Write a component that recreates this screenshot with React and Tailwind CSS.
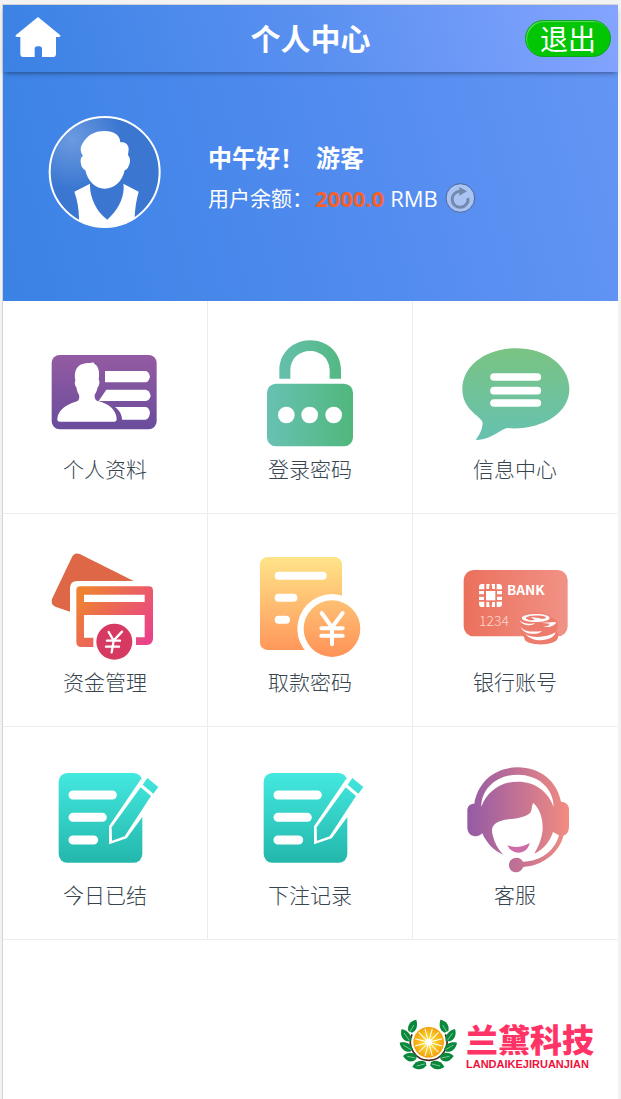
import React from "react";

const white = "#ffffff";

function HomeIcon() {
  return (
    <svg viewBox="45 42 144 132" className="h-11 w-12" aria-hidden="true">
      <path
        fill={white}
        d="M117 48 L184 103 Q186 108 180 108 H171 V158 Q171 168 161 168 H129 V144 Q129 136 121 136 H115 Q107 136 107 144 V168 H74 Q64 168 64 158 V108 H55 Q48 108 50 103 Z"
      />
    </svg>
  );
}

function Avatar() {
  return (
    <svg viewBox="54 45 342 342" className="size-[114px] shrink-0" role="img" aria-label="游客">
      <defs>
        <radialGradient id="avatarGlow" cx="0.2" cy="0.2" r="0.45">
          <stop offset="0" stopColor="#6c9be0" />
          <stop offset="1" stopColor="#3b77d1" />
        </radialGradient>
        <clipPath id="avatarClip">
          <circle cx="224" cy="216" r="166" />
        </clipPath>
      </defs>
      <circle cx="224" cy="216" r="163" fill="url(#avatarGlow)" />
      <g fill={white} clipPath="url(#avatarClip)">
        <path d="M159 168 C150 155 150 141 158 130 C172 107 190 93 224 93 C252 93 270 105 271 127 C285 125 296 133 296 148 L294 166 C301 172 302 188 296 198 C293 206 289 209 284 211 C277 244 254 266 224 266 C194 266 173 242 166 211 C158 206 153 199 152 186 C151 177 154 170 159 168 Z" />
        <path d="M133 275 L180 251 C178 290 199 335 232 359 C264 330 286 290 280 251 L326 275 C319 300 315 325 314 352 L314 390 H147 V352 C146 325 142 300 133 275 Z" />
      </g>
      <circle cx="224" cy="216" r="165" fill="none" stroke={white} strokeWidth="6" />
    </svg>
  );
}

function RefreshIcon() {
  return (
    <svg viewBox="762 153 96 96" className="size-8" aria-hidden="true">
      <circle cx="811" cy="201" r="43" fill="#a9c3f3" stroke="#4a6698" strokeWidth="3" />
      <path d="M811 181 A24 24 0 1 0 834 201" fill="none" stroke="#7389ad" strokeWidth="9" />
      <path d="M808 168 L831 181 L808 194 Z" fill="#7389ad" />
    </svg>
  );
}

const iconClass = "size-[120px]";

function ProfileIcon() {
  return (
    <svg viewBox="45 21 360 360" className={iconClass} aria-hidden="true">
      <defs>
        <linearGradient id="profile" x1="0" y1="0" x2="0" y2="1">
          <stop offset="0" stopColor="#945ba2" />
          <stop offset="1" stopColor="#694c9c" />
        </linearGradient>
      </defs>
      <rect x="65" y="75" width="315" height="223" rx="24" fill="url(#profile)" />
      <g fill={white}>
        <path d="M136 152 C131 124 140 103 167 100 C177 99 184 100 190 97 C192 103 199 104 203 112 C208 121 208 137 206 149 C211 155 207 168 203 172 C201 183 197 190 194 194 C193 207 198 212 207 214 C238 222 259 241 260 267 Q260 275 252 275 H90 Q81 275 82 266 C84 239 110 224 135 216 C148 212 149 205 147 194 C142 188 141 181 139 172 C134 165 133 158 136 152 Z" />
        <path d="M225 123 H347 Q356 124 360 140 Q356 156 347 157 H225 Z" />
        <path d="M229 179 H347 Q359 181 362 197 Q359 211 347 213 H206 Z" />
        <path d="M255 231 H347 Q358 232 360 249 Q357 267 347 269 H276 C276 254 268 240 255 231 Z" />
      </g>
    </svg>
  );
}

function LockIcon() {
  return (
    <svg viewBox="660 21 360 360" className={iconClass} aria-hidden="true">
      <defs>
        <linearGradient id="lock" gradientUnits="userSpaceOnUse" x1="711" y1="0" x2="969" y2="0">
          <stop offset="0" stopColor="#68c1b3" />
          <stop offset="1" stopColor="#50b77c" />
        </linearGradient>
      </defs>
      <path
        fill="url(#lock)"
        d="M748 146 V121 C748 68 790 31 840 31 C893 31 933 68 933 121 V146 H899 V121 C899 86 872 63 840 63 C807 63 781 86 781 121 V146 Z"
      />
      <rect x="711" y="161" width="258" height="188" rx="27" fill="url(#lock)" />
      <g fill={white}>
        <circle cx="769" cy="255" r="25" />
        <circle cx="839" cy="255" r="25" />
        <circle cx="911" cy="255" r="25" />
      </g>
    </svg>
  );
}

function MessageIcon() {
  return (
    <svg viewBox="45 21 360 360" className={iconClass} aria-hidden="true">
      <defs>
        <linearGradient id="message" x1="0" y1="0" x2="0" y2="1">
          <stop offset="0" stopColor="#7ac383" />
          <stop offset="1" stopColor="#66c1b0" />
        </linearGradient>
      </defs>
      <path
        fill="url(#message)"
        d="M228 55 C319 55 388 108 388 177 C388 248 311 298 211 295 Q200 292 188 299 C164 313 142 329 107 330 C120 313 130 292 127 275 C120 257 67 239 67 177 C67 108 137 55 228 55 Z"
      />
      <g stroke={white} strokeWidth="23" strokeLinecap="round">
        <path d="M162 141 H292" />
        <path d="M162 182 H292" />
        <path d="M162 219 H292" />
      </g>
    </svg>
  );
}

function FundsIcon() {
  return (
    <svg viewBox="45 30 360 360" className={iconClass} aria-hidden="true">
      <defs>
        <linearGradient id="funds" x1="0" y1="0.2" x2="1" y2="0.8">
          <stop offset="0" stopColor="#ee8430" />
          <stop offset="1" stopColor="#e9428a" />
        </linearGradient>
      </defs>
      <path
        fill="#dd6746"
        d="M126 51 Q133 36 149 42 L311 123 H142 Q120 123 120 145 V215 L76 200 Q61 193 66 177 Z"
      />
      <path
        fill="url(#funds)"
        fillRule="evenodd"
        d="M151 139 H356 Q369 139 369 152 V296 Q368 314 350 315 H318 V292 H344 V225 H162 V293 H190 V321 H154 Q139 321 139 307 V151 Q139 139 151 139 Z M162 164 V186 H344 V164 Z"
      />
      <circle cx="253" cy="305" r="54" fill="#d63961" />
      <g fill="none" stroke={white} strokeWidth="7" strokeLinecap="round">
        <path d="M236 276 L251 302 L276 275 M251 302 L245 337 M231 302 H270 M228 320 H267" />
      </g>
    </svg>
  );
}

function WithdrawIcon() {
  return (
    <svg viewBox="660 30 360 360" className={iconClass} aria-hidden="true">
      <defs>
        <linearGradient id="withdraw" gradientUnits="userSpaceOnUse" x1="0" y1="51" x2="0" y2="350">
          <stop offset="0" stopColor="#fee488" />
          <stop offset="1" stopColor="#ff9258" />
        </linearGradient>
      </defs>
      <rect x="690" y="51" width="246" height="279" rx="22" fill="url(#withdraw)" />
      <circle cx="906" cy="266" r="104" fill={white} />
      <circle cx="906" cy="266" r="85" fill="url(#withdraw)" />
      <g fill="none" stroke={white} strokeLinecap="round">
        <path strokeWidth="24" d="M746 107 H878 M746 173 H790 M746 239 H768" />
        <path
          strokeWidth="12"
          strokeLinejoin="round"
          d="M875 219 L906 262 L938 219 M906 262 V313 M874 265 H938 M874 287 H938"
        />
      </g>
    </svg>
  );
}

function BankIcon() {
  return (
    <svg viewBox="45 0 360 360" className={iconClass} aria-hidden="true">
      <defs>
        <linearGradient id="bank" x1="0" y1="0" x2="1" y2="0">
          <stop offset="0" stopColor="#eb705c" />
          <stop offset="1" stopColor="#f19286" />
        </linearGradient>
      </defs>
      <rect x="71" y="60" width="312" height="199" rx="30" fill="url(#bank)" />
      <g fill={white}>
        <rect x="138" y="123" width="28" height="28" />
        <path d="M117 118 V112 Q117 102 127 102 H133 V118 Z" />
        <path d="M186 118 V112 Q186 102 176 102 H170 V118 Z" />
        <path d="M117 155 V161 Q117 171 127 171 H133 V155 Z" />
        <path d="M186 155 V161 Q186 171 176 171 H170 V155 Z" />
        <path d="M139 102 H149 L147 117 H139 Z M155 102 H165 V117 H157 Z" />
        <path d="M139 171 H149 L147 156 H139 Z M155 171 H165 V156 H157 Z" />
        <path d="M117 123 H132 V133 H117 Z M117 140 H132 V150 H117 Z" />
        <path d="M171 123 H186 V133 H171 Z M171 140 H186 V150 H171 Z" />
      </g>
      <text x="201" y="135" fill={white} fontSize="41" fontWeight="700" fontFamily="'Noto Sans CJK SC', sans-serif">
        BANK
      </text>
      <text x="117" y="228" fill="#fbd8d1" fontSize="42" fontWeight="300" fontFamily="'Noto Sans CJK SC', sans-serif">
        1234
      </text>
      <path
        fill="#ed7c6d"
        d="M239 208 C250 185 317 181 335 203 C356 209 358 229 348 243 C357 253 358 266 346 274 C320 288 269 286 255 271 L251 259 C240 253 235 240 245 229 Z"
      />
      <g fill={white}>
        <path
          fillRule="evenodd"
          d="M245 204 C249 189 327 187 329 204 C327 219 249 221 245 204 Z M257 204 C262 211 277 213 284 209 L272 201 L296 204 C304 208 316 207 318 203 C313 195 266 194 257 204 Z"
        />
        <path d="M238 209 C246 220 266 223 286 220 C272 231 245 226 238 209 Z" />
        <path d="M303 218 L349 216 C344 230 323 234 309 229 C322 229 329 225 329 221 Z" />
        <path d="M243 230 C250 245 278 247 306 243 C293 258 245 253 243 230 Z" />
        <path d="M256 251 C275 265 318 264 347 247 C341 274 278 281 256 251 Z" />
      </g>
    </svg>
  );
}

function NoteIcon({ id }) {
  const fill = `url(#${id})`;
  return (
    <svg viewBox="45 24 360 360" className={iconClass} aria-hidden="true">
      <defs>
        <linearGradient id={id} gradientUnits="userSpaceOnUse" x1="0" y1="54" x2="0" y2="323">
          <stop offset="0" stopColor="#43e8df" />
          <stop offset="1" stopColor="#24b7ac" />
        </linearGradient>
      </defs>
      <rect x="86" y="54" width="251" height="269" rx="26" fill={fill} />
      <path d="M333 72 L343 80 V190 L337 186 L290 250 L237 268 V214 Z" fill={white} />
      <path d="M332 97 L363 123 L284 244 L246 257 L245 217 Z" fill={fill} />
      <path d="M352 69 L385 96 L370 116 L338 89 Z" fill={fill} />
      <path
        d="M129 120 H247 M129 187 H217 M129 255 H191"
        stroke={white}
        strokeWidth="27"
        strokeLinecap="round"
      />
    </svg>
  );
}

function ServiceIcon() {
  return (
    <svg viewBox="45 24 360 360" className={iconClass} aria-hidden="true">
      <defs>
        <linearGradient id="service" gradientUnits="userSpaceOnUse" x1="82" y1="0" x2="387" y2="0">
          <stop offset="0" stopColor="#935ba5" />
          <stop offset="0.45" stopColor="#be6f96" />
          <stop offset="1" stopColor="#f38c80" />
        </linearGradient>
      </defs>
      <path
        fill="url(#service)"
        fillRule="evenodd"
        d="M103 146 C113 82 164 37 232 37 C303 37 352 81 363 140 C379 141 387 150 387 164 V213 C387 231 380 239 371 241 C357 294 308 333 250 336 C244 347 238 352 229 352 C216 352 207 343 207 330 C207 317 217 308 230 308 C239 308 246 313 249 320 C303 320 345 286 357 241 L339 231 C329 262 309 284 283 296 C300 267 307 244 308 220 C308 190 301 164 280 144 C274 152 277 166 271 173 C248 195 204 188 176 200 C155 209 153 225 159 244 C164 265 174 283 190 299 C163 289 140 265 127 235 C119 243 110 245 101 243 C89 240 82 231 82 215 V168 C82 153 90 146 103 146 Z M124 155 C140 113 178 80 233 80 C287 80 325 111 341 156 C341 100 295 59 233 59 C171 59 124 101 124 155 Z"
      />
      <path d="M202 271 Q235 283 269 264 C262 301 216 302 202 271 Z" fill="#cd6da8" />
    </svg>
  );
}

const spokes = [0, 30, 60, 90, 120, 150, 180, 210, 240, 270, 300, 330];

function Emblem() {
  return (
    <svg viewBox="6 6 180 162" className="h-[54px] w-[60px]" aria-hidden="true">
      <defs>
        <radialGradient id="orange">
          <stop offset="0" stopColor="#fff04a" />
          <stop offset="1" stopColor="#f3a108" />
        </radialGradient>
        <g id="laurel">
          <path d="M61 14 C43 18 33 30 37 48 L48 53 C62 47 66 32 61 14 Z" />
          <path d="M17 42 C12 58 17 74 33 79 L45 79 C49 62 37 47 17 42 Z" />
          <path d="M11 83 C14 101 26 112 43 110 L50 103 C46 87 30 79 11 83 Z" />
          <path d="M21 123 C31 140 47 145 60 133 L63 123 C51 110 34 111 21 123 Z" />
          <path d="M49 155 C64 167 83 165 91 151 L89 141 C73 132 58 139 49 155 Z" />
        </g>
      </defs>
      <path d="M48 58 A55 55 0 1 0 148 58" fill="none" stroke="#4a2418" strokeWidth="5" />
      <circle cx="98" cy="82" r="50" fill={white} />
      <circle cx="98" cy="82" r="46" fill="url(#orange)" />
      <g stroke={white} strokeWidth="3">
        {spokes.map((angle) => (
          <path key={angle} d="M98 82 V40" transform={`rotate(${angle + 15} 98 82)`} />
        ))}
      </g>
      <circle cx="98" cy="82" r="10" fill={white} />
      <g fill="#08883b">
        <use href="#laurel" />
        <use href="#laurel" transform="translate(194 0) scale(-1 1)" />
      </g>
      <g stroke="#bfe3c9" strokeWidth="2" fill="none">
        <path d="M54 30 L42 50 M24 54 L40 76 M22 90 L45 104 M34 124 L58 129 M62 153 L86 147" />
        <path d="M140 30 L152 50 M170 54 L154 76 M172 90 L149 104 M160 124 L136 129 M132 153 L108 147" />
      </g>
    </svg>
  );
}

const entries = [
  { label: "个人资料", icon: <ProfileIcon /> },
  { label: "登录密码", icon: <LockIcon /> },
  { label: "信息中心", icon: <MessageIcon /> },
  { label: "资金管理", icon: <FundsIcon /> },
  { label: "取款密码", icon: <WithdrawIcon /> },
  { label: "银行账号", icon: <BankIcon /> },
  { label: "今日已结", icon: <NoteIcon id="noteToday" /> },
  { label: "下注记录", icon: <NoteIcon id="noteBets" /> },
  { label: "客服", icon: <ServiceIcon /> },
];

export default function App() {
  return (
    <div className="flex min-h-screen flex-col bg-[#f2f2f2] pt-1 pr-[3px] pl-0.5 font-['Open_Sans','Noto_Sans_CJK_SC',sans-serif]">
      <div className="flex grow flex-col border-t border-l border-[#d4d4d4] bg-white">
        <header className="relative grid h-[67px] grid-cols-[1fr_auto_1fr] items-center bg-linear-[75deg,#3a82e4,#5990f0_50%,#84a4ff] px-[7px] shadow-[0_3px_5px_-2px_rgba(0,0,0,0.45)]">
          <a href="#home" aria-label="首页" className="justify-self-start pb-1 pl-1">
            <HomeIcon />
          </a>
          <h1 className="text-[30px] leading-10 font-bold text-white">个人中心</h1>
          <button
            type="button"
            className="h-[37px] justify-self-end rounded-full border border-[#0aa51c] bg-[#02c503] px-3.5 text-[28px] leading-8 text-white shadow-[inset_1px_1px_1px_#5fdc60]"
          >
            退出
          </button>
        </header>

        <section className="flex items-start gap-[46px] bg-linear-[75deg,#3a82e4,#4f8aee_50%,#6495f4] pt-[43px] pb-[72px] pl-[45px] text-white">
          <Avatar />
          <div className="pt-[23px]">
            <p className="flex gap-3 text-2xl leading-10 font-bold">
              <span>中午好！</span>
              <span>游客</span>
            </p>
            <div className="flex h-10 items-center text-[22px] leading-10">
              <span className="mr-0.5 text-[21px]">用户余额：</span>
              <span className="mr-1.5 font-bold text-[#f6602a]">2000.0</span>
              <span>RMB</span>
              <button type="button" aria-label="刷新余额" className="ml-1.5">
                <RefreshIcon />
              </button>
            </div>
          </div>
        </section>

        <nav className="grid grid-cols-3">
          {entries.map(({ label, icon }) => (
            <a
              key={label}
              href={`#${label}`}
              className="flex h-[213px] flex-col items-center border-r border-b border-[#ececec] pt-9 text-[21px] leading-6 font-light text-[#37454f] nth-[3n]:border-r-transparent"
            >
              {icon}
              <span>{label}</span>
            </a>
          ))}
        </nav>

        <footer className="mt-auto flex items-center justify-end gap-2 pr-6 pb-7">
          <Emblem />
          <div>
            <p className="font-['Noto_Sans_CJK_SC',sans-serif] text-[32px] leading-10 font-black text-[#ff3366]">兰黛科技</p>
            <p className="font-['Liberation_Sans',sans-serif] text-[11px] leading-3 font-bold text-[#f0103c]">
              LANDAIKEJIRUANJIAN
            </p>
          </div>
        </footer>
      </div>
    </div>
  );
}
